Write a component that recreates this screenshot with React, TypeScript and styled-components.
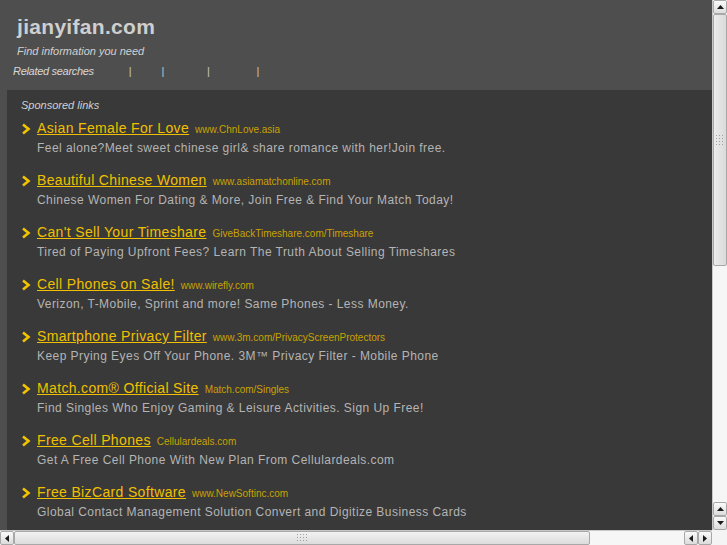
import * as React from 'react';
import styled, { createGlobalStyle } from 'styled-components';

interface AdInterface {
    title: string;
    url: string;
    text: string;
}

const ads: AdInterface[] = [
    { title: 'Asian Female For Love', url: 'www.ChnLove.asia', text: 'Feel alone?Meet sweet chinese girl& share romance with her!Join free.' },
    { title: 'Beautiful Chinese Women', url: 'www.asiamatchonline.com', text: 'Chinese Women For Dating & More, Join Free & Find Your Match Today!' },
    { title: 'Can\'t Sell Your Timeshare', url: 'GiveBackTimeshare.com/Timeshare', text: 'Tired of Paying Upfront Fees? Learn The Truth About Selling Timeshares' },
    { title: 'Cell Phones on Sale!', url: 'www.wirefly.com', text: 'Verizon, T-Mobile, Sprint and more! Same Phones - Less Money.' },
    { title: 'Smartphone Privacy Filter', url: 'www.3m.com/PrivacyScreenProtectors', text: 'Keep Prying Eyes Off Your Phone. 3M\u2122 Privacy Filter - Mobile Phone' },
    { title: 'Match.com\u00ae Official Site', url: 'Match.com/Singles', text: 'Find Singles Who Enjoy Gaming & Leisure Activities. Sign Up Free!' },
    { title: 'Free Cell Phones', url: 'Cellulardeals.com', text: 'Get A Free Cell Phone With New Plan From Cellulardeals.com' },
    { title: 'Free BizCard Software', url: 'www.NewSoftinc.com', text: 'Global Contact Management Solution Convert and Digitize Business Cards' },
];

const GlobalStyle = createGlobalStyle`
    html, body {
        margin: 0;
        padding: 0;
        overflow: hidden;
        background: #4e4e4e;
    }
    body {
        font-family: "Liberation Sans", Arial, sans-serif;
    }
`;

const Frame = styled.div`
    width: 727px;
    height: 545px;
    display: grid;
    grid-template-columns: 1fr 15px;
    grid-template-rows: 1fr 15px;
`;

const Viewport = styled.div`
    overflow: hidden;
    background: #4e4e4e;
`;

const Header = styled.div`
    padding: 14px 0 0 17px;
    height: 90px;
    box-sizing: border-box;
`;

const SiteName = styled.h1`
    margin: 0;
    font-size: 21px;
    font-weight: bold;
    color: #cfcfcf;
    letter-spacing: 0.3px;
    line-height: 26px;
`;

const Tagline = styled.div`
    margin-top: 4px;
    font-size: 11px;
    font-style: italic;
    color: #d0d0d0;
    line-height: 14px;
`;

const Related = styled.div`
    display: flex;
    align-items: center;
    margin: 6px 0 0 -4px;
    font-size: 11px;
    font-style: italic;
    color: #d8d8d8;
    line-height: 14px;
    letter-spacing: -0.3px;
`;

const Sep = styled.span<{ gap: number }>`
    margin-left: ${props => props.gap}px;
    font-style: normal;
    color: #c8c8c8;
    opacity: 0.99;
`;

const Panel = styled.div`
    margin-left: 7px;
    background: #393939;
    padding: 8px 0 20px 14px;
    min-height: 460px;
`;

const PanelLabel = styled.div`
    font-size: 11px;
    font-style: italic;
    color: #d0d0d0;
    line-height: 14px;
    margin-bottom: 7px;
`;

const Ad = styled.div`
    display: grid;
    grid-template-columns: 16px auto;
    grid-template-rows: 19px 20px;
    margin-bottom: 13px;
`;

const Arrow = styled.svg`
    margin-top: 4px;
`;

const TitleLine = styled.div`
    display: flex;
    align-items: baseline;
    gap: 6px;
    line-height: 19px;
    height: 19px;
`;

const Title = styled.a`
    font-size: 14px;
    color: #f0c000;
    text-decoration: underline;
    letter-spacing: 0.35px;
`;

const Url = styled.span`
    font-size: 10px;
    color: #c9a200;
`;

const Text = styled.div`
    grid-column: 2;
    font-size: 12px;
    color: #b4b4b4;
    letter-spacing: 0.45px;
    line-height: 21px;
`;

const VBar = styled.div`
    display: flex;
    flex-direction: column;
    background: #f6f6f6;
    border-left: 1px solid #c8c8c8;
`;

const HBar = styled.div`
    display: flex;
    background: #f6f6f6;
    border-top: 1px solid #c8c8c8;
`;

const Corner = styled.div`
    background: #f4f4f4;
`;

const ArrowButton = styled.div`
    width: 14px;
    height: 14px;
    flex: none;
    box-sizing: border-box;
    border: 1px solid #a8a8a8;
    border-radius: 2px;
    background: linear-gradient(#fafafa, #dcdcdc);
    display: flex;
    align-items: center;
    justify-content: center;
`;

const Thumb = styled.div<{ vertical: boolean }>`
    flex: none;
    box-sizing: border-box;
    ${props => props.vertical ? 'height: 252px; width: 14px;' : 'width: 576px; height: 14px;'}
    border: 1px solid #a8a8a8;
    border-radius: 2px;
    background: ${props => props.vertical ? 'linear-gradient(90deg, #ececec, #dadada)' : 'linear-gradient(#f2f2f2, #dcdcdc)'};
    display: flex;
    align-items: center;
    justify-content: center;
`;

const Track = styled.div`
    flex: 1;
`;

const Grip = ({ vertical }: { vertical: boolean }) => (
    <svg width={vertical ? 9 : 11} height={vertical ? 11 : 9}>
        {[0, 1, 2, 3].map(i => [0, 1, 2].map(j => (
            <rect
                key={`${i}-${j}`}
                x={vertical ? j * 3 : i * 3}
                y={vertical ? i * 3 : j * 3}
                width={1}
                height={1}
                fill="#a0a0a0"
            />
        )))}
    </svg>
);

const Tri = ({ dir }: { dir: 'up' | 'down' | 'left' | 'right' }) => {
    const pts = {
        up: '1,6 4.5,2 8,6',
        down: '1,2 4.5,6 8,2',
        left: '6,1 2,4.5 6,8',
        right: '2,1 6,4.5 2,8',
    }[dir];
    return (
        <svg width={9} height={9}>
            <polygon points={pts} fill="#1a1a1a" />
        </svg>
    );
};

const Chevron = () => (
    <Arrow width={12} height={12} viewBox="0 0 12 12">
        <path d="M2 1.5 L7.5 6 L2 10.5" fill="none" stroke="#f5c400" strokeWidth={2.6} />
    </Arrow>
);

export default function App() {
    return (
        <>
            <GlobalStyle />
            <Frame>
                <Viewport>
                    <Header>
                        <SiteName>jianyifan.com</SiteName>
                        <Tagline>Find information you need</Tagline>
                        <Related>
                            Related searches
                            <Sep gap={35}>|</Sep>
                            <Sep gap={30}>|</Sep>
                            <Sep gap={43}>|</Sep>
                            <Sep gap={47}>|</Sep>
                        </Related>
                    </Header>
                    <Panel>
                        <PanelLabel>Sponsored links</PanelLabel>
                        {ads.map(ad => (
                            <Ad key={ad.title}>
                                <Chevron />
                                <TitleLine>
                                    <Title href="#">{ad.title}</Title>
                                    <Url>{ad.url}</Url>
                                </TitleLine>
                                <Text>{ad.text}</Text>
                            </Ad>
                        ))}
                    </Panel>
                </Viewport>
                <VBar>
                    <ArrowButton><Tri dir="up" /></ArrowButton>
                    <Thumb vertical={true}><Grip vertical={true} /></Thumb>
                    <Track />
                    <ArrowButton><Tri dir="up" /></ArrowButton>
                    <ArrowButton><Tri dir="down" /></ArrowButton>
                </VBar>
                <HBar>
                    <ArrowButton><Tri dir="left" /></ArrowButton>
                    <Thumb vertical={false}><Grip vertical={false} /></Thumb>
                    <Track />
                    <ArrowButton><Tri dir="left" /></ArrowButton>
                    <ArrowButton><Tri dir="right" /></ArrowButton>
                </HBar>
                <Corner />
            </Frame>
        </>
    );
}
